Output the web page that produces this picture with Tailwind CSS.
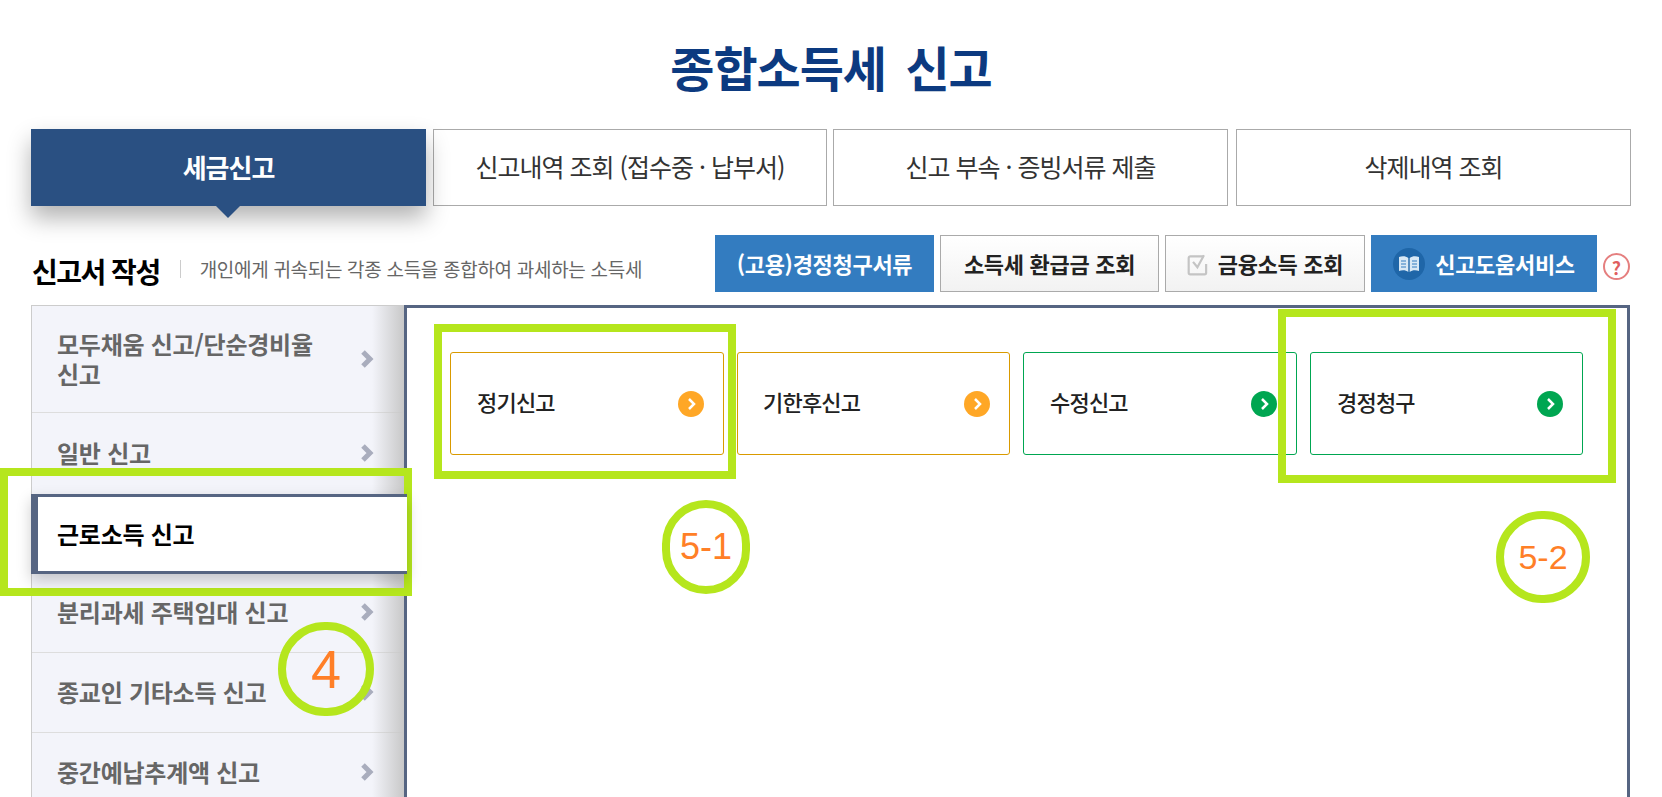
<!DOCTYPE html>
<html lang="ko">
<head>
<meta charset="UTF-8">
<title>종합소득세 신고</title>
<script src="https://cdn.jsdelivr.net/npm/@tailwindcss/browser@4"></script>
</head>
<body class="bg-white font-['Noto_Sans_CJK_KR','Noto_Sans',sans-serif] overflow-hidden">
<div class="relative w-[1662px] h-[797px] overflow-hidden">

  <!-- title -->
  <h1 class="h-[129px] pt-[35px] text-center text-[48px] leading-[62px] font-bold tracking-[-1px] [word-spacing:7px] text-[#0c3a80]">종합소득세 신고</h1>

  <!-- tabs -->
  <div class="flex gap-[7px] pl-[31px]">
    <div class="relative w-[395px] h-[77px] pb-[2px] flex items-center justify-center bg-[#2a5082] text-white text-[26px] font-bold tracking-[-1px] shadow-[0_12px_22px_rgba(0,0,0,0.3)]">
      세금신고
      <span class="absolute left-[185px] top-[77px] w-0 h-0 border-l-[12px] border-r-[12px] border-t-[12px] border-l-transparent border-r-transparent border-t-[#2a5082]"></span>
    </div>
    <div class="w-[394px] h-[77px] pb-[2px] flex items-center justify-center border border-[#aaa] text-[#333] text-[25px] tracking-[-1px]">신고내역 조회 (접수중 · 납부서)</div>
    <div class="-ml-px w-[395px] h-[77px] pb-[2px] flex items-center justify-center border border-[#aaa] text-[#333] text-[25px] tracking-[-1px]">신고 부속 · 증빙서류 제출</div>
    <div class="ml-px w-[395px] h-[77px] pb-[2px] flex items-center justify-center border border-[#aaa] text-[#333] text-[25px] tracking-[-1px]">삭제내역 조회</div>
  </div>

  <!-- section header -->
  <div class="flex items-center h-[57px] mt-[29px] pl-[32px]">
    <h2 class="pt-[14px] text-[28px] font-bold tracking-[-1.5px] text-black">신고서 작성</h2>
    <span class="w-px h-[18px] mt-[11px] bg-[#ccc] ml-[20px]"></span>
    <p class="ml-[19px] pt-[11px] w-[500px] text-[19px] tracking-[-0.3px] text-[#666]">개인에게 귀속되는 각종 소득을 종합하여 과세하는 소득세</p>
    <div class="flex gap-[6px] absolute left-[715px]">
      <button class="w-[219px] h-[57px] bg-[#337cc0] text-white text-[22px] font-bold tracking-[-0.3px]">(고용)경정청구서류</button>
      <button class="w-[219px] h-[57px] border border-[#aaa] bg-gradient-to-b from-white to-[#f2f2f2] text-[#222] text-[22px] font-bold tracking-[-0.3px]">소득세 환급금 조회</button>
      <button class="w-[200px] h-[57px] flex items-center justify-center gap-[8px] border border-[#aaa] bg-gradient-to-b from-white to-[#f2f2f2] text-[#222] text-[22px] font-bold tracking-[-0.3px]">
        <svg width="23" height="24" viewBox="0 0 20 22" fill="none"><path d="M15 4H2.500A1.500 1.500 0 0 0 1 5.500V19a1.500 1.500 0 0 0 1.500 1.500h13A1.500 1.500 0 0 0 17 19V11" stroke="#c4c4c4" stroke-width="2"/><path d="M5 9l4 5 6-11" stroke="#c4c4c4" stroke-width="2"/></svg>
        금융소득 조회
      </button>
      <button class="w-[226px] h-[57px] flex items-center justify-center gap-[10px] bg-[#337cc0] text-white text-[22px] font-bold tracking-[-0.3px]">
        <span class="w-[32px] h-[32px] rounded-full bg-[#1f66a8] flex items-center justify-center">
          <svg width="22" height="18" viewBox="0 0 22 18" fill="#d8e8f5"><path d="M1 2c3-1 7-1 9.300 1v14C8 15 4 15 1 16zM21 2c-3-1-7-1-9.300 1v14c2.300-2 6.300-2 9.300-1z"/><path d="M3 6h5M3 9h5M3 12h5M14 6h5M14 9h5M14 12h5" stroke="#337cc0" stroke-width="1"/></svg>
        </span>
        신고도움서비스
      </button>
    </div>
    <span class="absolute left-[1603px] top-[253px] w-[27px] h-[27px] rounded-full border-2 border-[#e57f7f] flex items-center justify-center text-[#e05f5f] text-[18px] font-bold leading-none">?</span>
  </div>

  <!-- content -->
  <div class="flex mt-[13px] pl-[31px] h-[492px]">
    <ul class="relative w-[373px] border-l border-t border-[#ccc] bg-[#f3f4fa] text-[24px] font-bold tracking-[-0.25px] text-[#666]">
      <li class="h-[107px] flex items-center justify-between pl-[25px] pr-[30px] border-b border-[#ddd] leading-[30px]"><span class="w-[265px]">모두채움 신고/단순경비율 신고</span>
        <svg width="14" height="18" viewBox="0 0 14 18" fill="none"><path d="M3 2l7 7-7 7" stroke="#a9adbd" stroke-width="5"/></svg></li>
      <li class="h-[81px] pb-[2px] flex items-center justify-between pl-[25px] pr-[30px]">일반 신고
        <svg width="14" height="18" viewBox="0 0 14 18" fill="none"><path d="M3 2l7 7-7 7" stroke="#a9adbd" stroke-width="5"/></svg></li>
      <li class="relative z-10 -ml-px w-[376px] h-[80px] flex items-center pl-[19px] border-t-[3px] border-b-[3px] border-l-[7px] border-[#566582] bg-white text-black shadow-[0_6px_14px_rgba(0,0,0,0.2)]">근로소득 신고</li>
      <li class="h-[79px] pb-[3px] flex items-center justify-between pl-[25px] pr-[30px] border-b border-[#ddd]">분리과세 주택임대 신고
        <svg width="14" height="18" viewBox="0 0 14 18" fill="none"><path d="M3 2l7 7-7 7" stroke="#a9adbd" stroke-width="5"/></svg></li>
      <li class="h-[80px] pb-[2px] flex items-center justify-between pl-[25px] pr-[30px] border-b border-[#ddd]">종교인 기타소득 신고
        <svg width="14" height="18" viewBox="0 0 14 18" fill="none"><path d="M3 2l7 7-7 7" stroke="#a9adbd" stroke-width="5"/></svg></li>
      <li class="h-[80px] pb-[2px] flex items-center justify-between pl-[25px] pr-[30px]">중간예납추계액 신고
        <svg width="14" height="18" viewBox="0 0 14 18" fill="none"><path d="M3 2l7 7-7 7" stroke="#a9adbd" stroke-width="5"/></svg></li>
      <li class="absolute right-0 top-0 bottom-0 w-[32px] bg-gradient-to-r from-transparent to-[#c8c8c8]"></li>
    </ul>
    <div class="w-[1226px] shrink-0 border-[3px] border-b-0 border-[#566582] pt-[44px] pl-[43px]">
      <div class="flex gap-[13px] text-[22px] font-medium tracking-[-0.8px] text-[#222]">
        <div class="w-[274px] h-[103px] rounded-[3px] border border-[#d99a00] flex items-center justify-between pl-[26px] pr-[19px]"><span class="pb-[5px]">정기신고</span>
          <span class="w-[26px] h-[26px] rounded-full bg-[#ffa726] flex items-center justify-center"><svg width="12" height="14" viewBox="0 0 12 14" fill="none"><path d="M4 2l5 5-5 5" stroke="#fff" stroke-width="2.500"/></svg></span></div>
        <div class="w-[273px] h-[103px] rounded-[3px] border border-[#d99a00] flex items-center justify-between pl-[25px] pr-[19px]"><span class="pb-[5px]">기한후신고</span>
          <span class="w-[26px] h-[26px] rounded-full bg-[#ffa726] flex items-center justify-center"><svg width="12" height="14" viewBox="0 0 12 14" fill="none"><path d="M4 2l5 5-5 5" stroke="#fff" stroke-width="2.500"/></svg></span></div>
        <div class="w-[274px] h-[103px] rounded-[3px] border border-[#00a651] flex items-center justify-between pl-[26px] pr-[19px]"><span class="pb-[5px]">수정신고</span>
          <span class="w-[26px] h-[26px] rounded-full bg-[#00a651] flex items-center justify-center"><svg width="12" height="14" viewBox="0 0 12 14" fill="none"><path d="M4 2l5 5-5 5" stroke="#fff" stroke-width="2.500"/></svg></span></div>
        <div class="w-[273px] h-[103px] rounded-[3px] border border-[#00a651] flex items-center justify-between pl-[26px] pr-[19px]"><span class="pb-[5px]">경정청구</span>
          <span class="w-[26px] h-[26px] rounded-full bg-[#00a651] flex items-center justify-center"><svg width="12" height="14" viewBox="0 0 12 14" fill="none"><path d="M4 2l5 5-5 5" stroke="#fff" stroke-width="2.500"/></svg></span></div>
      </div>
    </div>
  </div>

  <!-- marker annotations drawn on top of the screenshot -->
  <div class="absolute left-[434px] top-[324px] w-[302px] h-[155px] border-[8px] border-[#b5e61d]"></div>
  <div class="absolute left-[1278px] top-[309px] w-[338px] h-[174px] border-[8px] border-[#b5e61d]"></div>
  <div class="absolute left-0 top-[468px] w-[412px] h-[128px] border-[8px] border-[#b5e61d]"></div>
  <div class="absolute left-[278px] top-[622px] w-[96px] h-[94px] rounded-full border-[8px] border-[#b5e61d] flex items-center justify-center text-[#ff7f27] text-[54px] font-['Liberation_Sans',sans-serif]">4</div>
  <div class="absolute left-[662px] top-[500px] w-[88px] h-[94px] rounded-full border-[8px] border-[#b5e61d] flex items-center justify-center text-[#ff7f27] text-[36px] font-['Liberation_Sans',sans-serif]">5-1</div>
  <div class="absolute left-[1496px] top-[511px] w-[94px] h-[92px] rounded-full border-[8px] border-[#b5e61d] flex items-center justify-center text-[#ff7f27] text-[34px] font-['Liberation_Sans',sans-serif]">5-2</div>
</div>
</body>
</html>
